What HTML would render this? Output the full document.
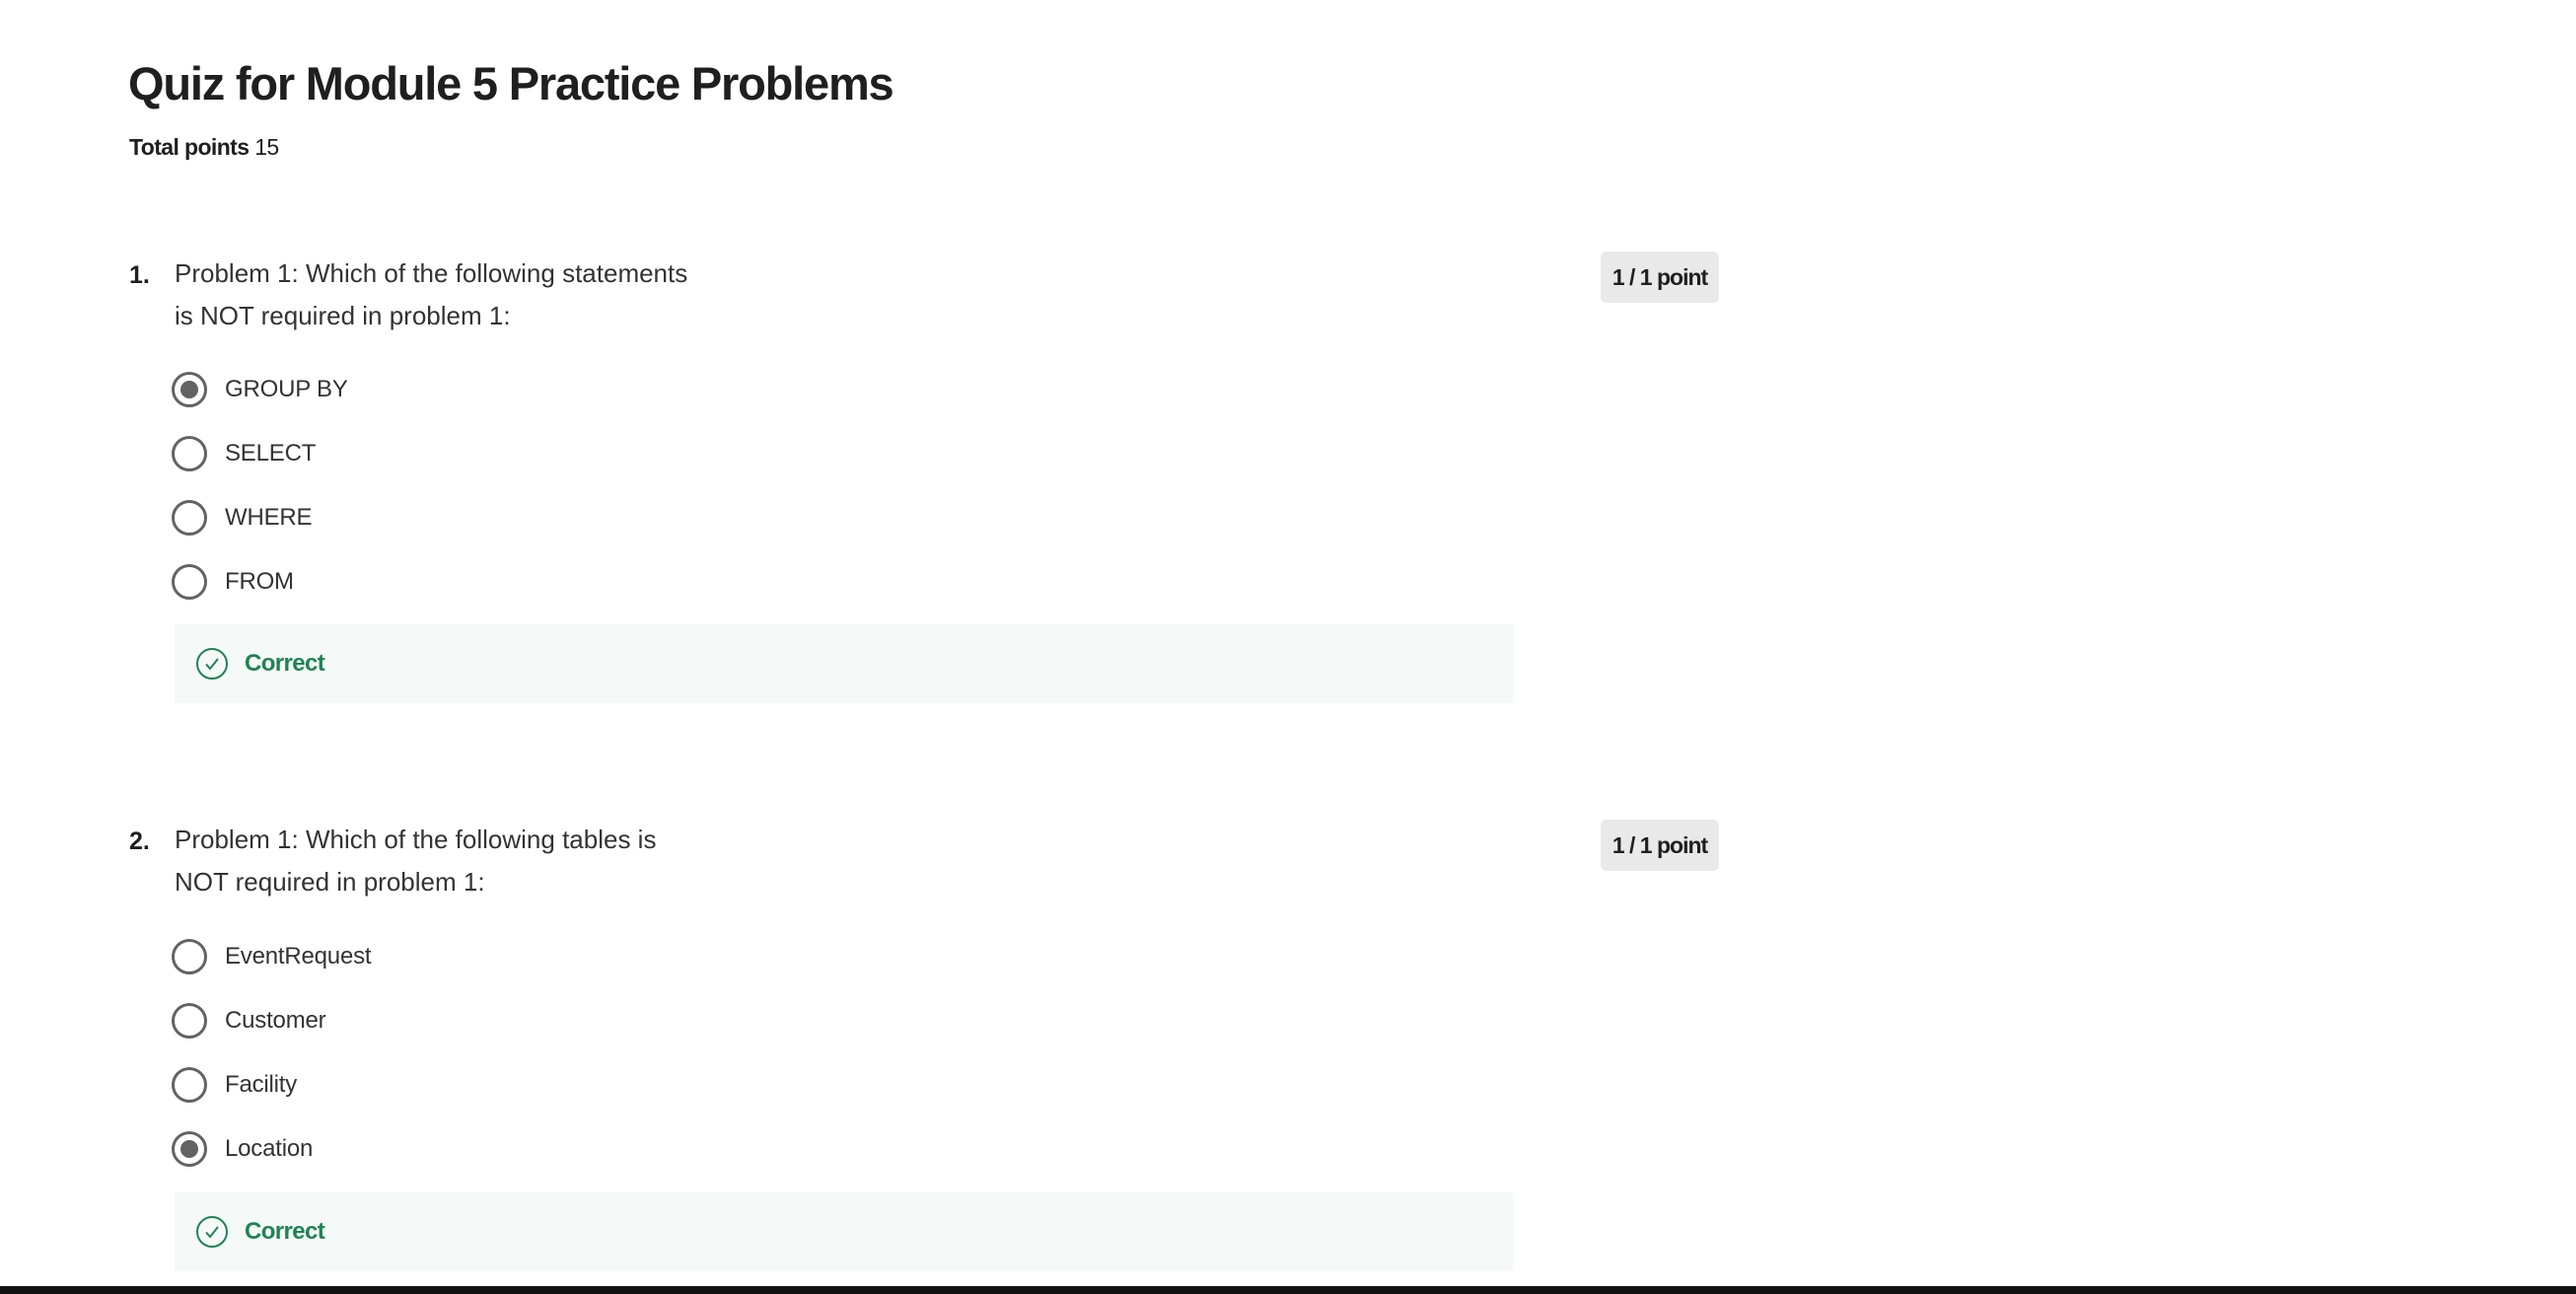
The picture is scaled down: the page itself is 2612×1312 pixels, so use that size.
<!DOCTYPE html>
<html><head><meta charset="utf-8"><style>
html,body{margin:0;padding:0;width:2612px;height:1312px;overflow:hidden;background:#fff;font-family:"Liberation Sans",sans-serif;color:#1f1f1f;position:relative}
.a{position:absolute;white-space:nowrap}
h1{position:absolute;left:130px;top:57px;margin:0;font-size:47px;font-weight:bold;letter-spacing:-1.2px;color:#1f1f1f}
.tp{left:131px;top:136px;font-size:23px;letter-spacing:-0.6px}
.num{font-size:25px;font-weight:bold;left:131px}
.q{font-size:26px;left:177px;line-height:43px;color:#333;letter-spacing:0px}
.badge{left:1623px;width:120px;height:52px;background:#e9e9e9;border-radius:6px;font-size:23px;font-weight:bold;text-align:center;line-height:52px;letter-spacing:-1px;color:#1f1f1f}
.r{left:174px;width:36px;height:36px;border:3px solid #636363;border-radius:50%;box-sizing:border-box}
.r.s::after{content:"";position:absolute;left:6px;top:6px;width:18px;height:18px;border-radius:50%;background:#636363}
.l{left:228px;font-size:24px;color:#333;letter-spacing:-0.2px}
.box{left:177px;width:1358px;height:80px;background:#f5f9f8}
.ok{font-size:24px;font-weight:bold;color:#1f8354;letter-spacing:-0.6px}
.bar{left:0;top:1304px;width:2612px;height:8px;background:#111}
</style></head><body>
<h1>Quiz for Module 5 Practice Problems</h1>
<div class="a tp"><b>Total points</b> 15</div>

<div class="a num" style="top:265px">1.</div>
<div class="a q" style="top:256px">Problem 1: Which of the following statements<br>is NOT required in problem 1:</div>
<div class="a badge" style="top:255px">1 / 1 point</div>
<div class="a r s" style="top:377px"></div><div class="a l" style="top:381px">GROUP BY</div>
<div class="a r" style="top:442px"></div><div class="a l" style="top:446px">SELECT</div>
<div class="a r" style="top:507px"></div><div class="a l" style="top:511px">WHERE</div>
<div class="a r" style="top:572px"></div><div class="a l" style="top:576px">FROM</div>
<div class="a box" style="top:633px">
<svg style="position:absolute;left:21px;top:23px" width="34" height="34" viewBox="0 0 34 34"><circle cx="17" cy="17" r="15" fill="none" stroke="#1f8354" stroke-width="2"/><path d="M11 17.5l4 4.5 8-10" fill="none" stroke="#1f8354" stroke-width="2"/></svg>
<div class="a ok" style="left:71px;top:26px">Correct</div></div>

<div class="a num" style="top:839px">2.</div>
<div class="a q" style="top:830px">Problem 1: Which of the following tables is<br>NOT required in problem 1:</div>
<div class="a badge" style="top:831px">1 / 1 point</div>
<div class="a r" style="top:952px"></div><div class="a l" style="top:956px">EventRequest</div>
<div class="a r" style="top:1017px"></div><div class="a l" style="top:1021px">Customer</div>
<div class="a r" style="top:1082px"></div><div class="a l" style="top:1086px">Facility</div>
<div class="a r s" style="top:1147px"></div><div class="a l" style="top:1151px">Location</div>
<div class="a box" style="top:1209px">
<svg style="position:absolute;left:21px;top:23px" width="34" height="34" viewBox="0 0 34 34"><circle cx="17" cy="17" r="15" fill="none" stroke="#1f8354" stroke-width="2"/><path d="M11 17.5l4 4.5 8-10" fill="none" stroke="#1f8354" stroke-width="2"/></svg>
<div class="a ok" style="left:71px;top:26px">Correct</div></div>
<div class="a bar"></div>
</body></html>
